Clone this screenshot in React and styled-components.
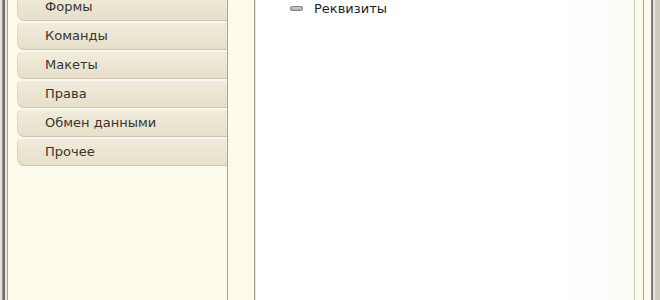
import React from "react";
import styled, { createGlobalStyle } from "styled-components";

const GlobalStyle = createGlobalStyle`
  html, body {
    margin: 0;
    padding: 0;
    background: #fdfcf2;
  }
  body {
    font-family: Tahoma, "DejaVu Sans", "Liberation Sans", sans-serif;
  }
`;

const Window = styled.div`
  width: 660px;
  height: 300px;
  overflow: hidden;
  display: flex;
  background: #fcfaeb;
`;

const LeftFrame = styled.div`
  width: 7px;
  flex-shrink: 0;
  background: linear-gradient(
    to right,
    #e4e2da 0px,
    #e4e2da 2px,
    #9a9a94 2px,
    #9a9a94 3px,
    #6e6e68 3px,
    #6e6e68 5px,
    #eceae0 5px,
    #eceae0 7px
  );
  border-right: 1px solid #a8a697;
`;

const TabPanel = styled.div`
  width: 210px;
  flex-shrink: 0;
  background: #fcfaeb;
  border-right: 1px solid #a9a796;
  padding-left: 9px;
`;

const TabList = styled.ul`
  list-style: none;
  margin: -8px 0 0;
  padding: 0;
`;

const Tab = styled.li`
  height: 27px;
  display: flex;
  align-items: center;
  padding-left: 27px;
  font-size: 13px;
  color: #36362f;
  background: linear-gradient(to bottom, #f1ecdc 0%, #ebe4d1 60%, #e6dfca 100%);
  border-top: 1px solid #f8f5ea;
  border-bottom: 1px solid #cdc6b0;
  border-left: 1px solid #ddd6c2;
  border-radius: 7px 0 0 7px;
  box-shadow: inset 0 1px 0 #faf7ee;
`;

const Gutter = styled.div`
  width: 26px;
  flex-shrink: 0;
  background: linear-gradient(to right, #fdfcec, #fcfbe6);
  border-right: 1px solid #9f9f8e;
`;

const Content = styled.div`
  flex: 1;
  background: linear-gradient(to right, #ffffff 0%, #ffffff 80%, #fbfbf8 100%);
  border-left: 1px solid #e6e6dc;
  border-right: 1px solid #c8c9b6;
  padding: 0 0 0 34px;
`;

const TreeRow = styled.div`
  display: flex;
  align-items: center;
  height: 17px;
  gap: 11px;
  font-size: 13px;
  color: #1e1e1e;
`;

const RightFrame = styled.div`
  width: 25px;
  flex-shrink: 0;
  background: linear-gradient(
    to right,
    #fbfbe8 0px,
    #fbfbe8 8px,
    #a9a896 8px,
    #a9a896 9px,
    #fbfaec 9px,
    #fbfaec 16px,
    #8d8b80 16px,
    #8d8b80 17px,
    #6d6b64 17px,
    #6d6b64 18px,
    #e8e6dc 18px,
    #e8e6dc 20px,
    #cfcbc0 20px,
    #cfcbc0 25px
  );
`;

const AttrIcon = () => (
  <svg width="13" height="5" viewBox="0 0 13 5">
    <rect x="0.5" y="0.5" width="12" height="4" rx="1.5" fill="#aeb1b7" stroke="#83878e" />
    <line x1="2" y1="2" x2="11" y2="2" stroke="#d8dade" />
  </svg>
);

const tabs = ["Формы", "Команды", "Макеты", "Права", "Обмен данными", "Прочее"];

export default function App() {
  return (
    <>
      <GlobalStyle />
      <Window>
        <LeftFrame />
        <TabPanel>
          <TabList>
            {tabs.map((t) => (
              <Tab key={t}>{t}</Tab>
            ))}
          </TabList>
        </TabPanel>
        <Gutter />
        <Content>
          <TreeRow>
            <AttrIcon />
            Реквизиты
          </TreeRow>
        </Content>
        <RightFrame />
      </Window>
    </>
  );
}
